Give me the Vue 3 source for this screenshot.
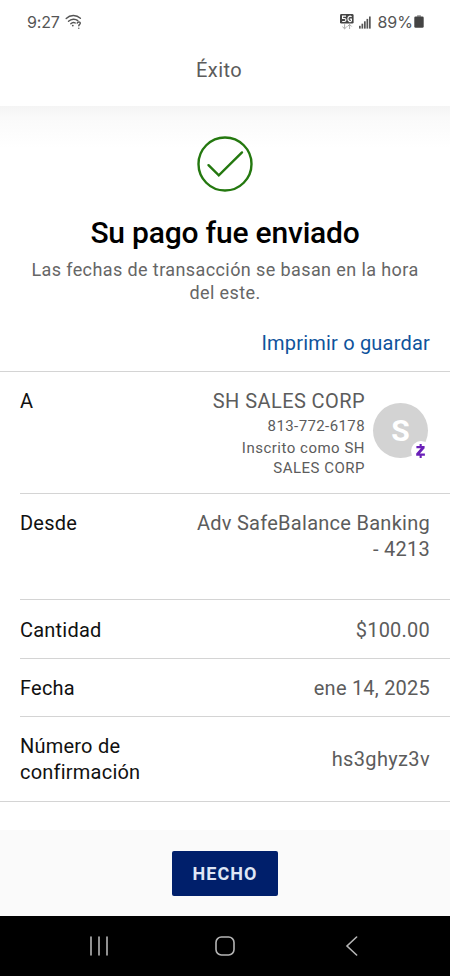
<script setup>
const details = [
  { key: 'from', label: 'Desde', value: 'Adv SafeBalance Banking\n- 4213' },
  { key: 'amount', label: 'Cantidad', value: '$100.00' },
  { key: 'date', label: 'Fecha', value: 'ene 14, 2025' },
  { key: 'confirmation', label: 'Número de\nconfirmación', value: 'hs3ghyz3v' },
]
</script>

<template>
  <div class="screen">
    <header class="top">
      <div class="status">
        <span class="clock">9:27</span>
        <svg class="wifi" width="18" height="16" viewBox="0 0 18 16" fill="none" stroke="#555" stroke-width="1.4" stroke-linecap="round">
          <path d="M1.2 4.6C5.2.6 11.4.6 15.4 4.3" />
          <path d="M3.5 7.3C6.3 4.6 10.4 4.6 12.8 6.6" />
          <path d="M5.8 9.7C7.2 8.3 9 8.2 10.3 9" />
          <circle cx="7.8" cy="11.6" r=".9" fill="#555" stroke="none" />
          <path d="M12.2 9.1c.3-1.6 3.2-1.5 3.1.2 0 1-1.5 1.2-1.5 2.4M13.8 14.2v.1" />
        </svg>
        <span class="spacer"></span>
        <svg class="net" width="14" height="16" viewBox="0 0 14 16">
          <rect x="0" y="0" width="13.6" height="9.6" rx="1.4" fill="#444" />
          <path d="M6 2.2H2.6v2.3h1.8c2 0 2 3-.1 3H2.2M11.5 3C10.6 1.7 7.9 1.9 7.9 4.8S10.6 8 11.4 7V5.2H9.8" fill="none" stroke="#fff" stroke-width="1.2" />
          <path d="M4.6 10.2v4.6M2.4 12.7l2.2 2.1 2.2-2.1M9.6 15v-4.6M7.5 12.5l2.1-2.1 2.1 2.1" fill="none" stroke="#aaa" stroke-width="1" />
        </svg>
        <svg class="signal" width="12" height="13" viewBox="0 0 12 13" fill="#555">
          <rect x="0" y="9.8" width="1.7" height="2.8" />
          <rect x="2.5" y="7.7" width="1.7" height="4.9" />
          <rect x="5" y="5.3" width="1.7" height="7.3" />
          <rect x="7.5" y="2.9" width="1.7" height="9.7" />
          <rect x="10" y="0.5" width="1.7" height="12.1" />
        </svg>
        <span class="percent">89%</span>
        <svg class="battery" width="10" height="13" viewBox="0 0 10 13">
          <rect x="3" y="0" width="4" height="2" rx=".6" fill="#aaa" />
          <rect x="0.3" y="1.4" width="9.4" height="11.4" rx="1.4" fill="#444" />
        </svg>
      </div>
      <h2 class="title">Éxito</h2>
    </header>

    <main class="content">
      <section class="hero">
        <svg class="check" width="56" height="56" viewBox="0 0 56 56" fill="none" stroke="#24780f">
          <circle cx="28" cy="28" r="26.5" stroke-width="2.4" />
          <path d="M11.5 29.2L21.8 39.4L45 16.4" stroke-width="2.4" stroke-linecap="round" />
        </svg>
        <h1 class="headline">Su pago fue enviado</h1>
        <p class="note">Las fechas de transacción se basan en la hora<br />del este.</p>
      </section>
      <a class="print">Imprimir o guardar</a>

      <section class="details">
        <div class="row payee">
          <span class="label">A</span>
          <div class="who">
            <span class="name">SH SALES CORP</span>
            <span class="phone">813-772-6178</span>
            <span class="enrolled">Inscrito como SH</span>
            <span class="enrolled">SALES CORP</span>
          </div>
          <div class="avatar">
            <span>S</span>
            <svg class="badge" width="20" height="20" viewBox="0 0 20 20">
              <circle cx="10" cy="10" r="10" fill="#fff" />
              <path d="M5.4 5h8.2v2.2L9 12.4h4.9v2.3H5.2v-2.2l4.6-5.2H5.4zM8.6 3h2.1v2.4H8.6zM8.6 14.4h2.1v2.6H8.6z" fill="#6a1fb8" />
            </svg>
          </div>
        </div>
        <div v-for="d in details" :key="d.key" class="row" :class="d.key">
          <span class="label">{{ d.label }}</span>
          <span class="value">{{ d.value }}</span>
        </div>
      </section>
    </main>

    <footer class="action">
      <button class="done" type="button">HECHO</button>
    </footer>

    <nav class="system">
      <svg width="20" height="20" viewBox="0 0 20 20" stroke="#b5b5b5" stroke-width="1.6" stroke-linecap="round">
        <path d="M2 1v18M10 1v18M18 1v18" />
      </svg>
      <svg width="20" height="20" viewBox="0 0 20 20" fill="none" stroke="#b5b5b5" stroke-width="1.6">
        <rect x="1" y="1" width="18" height="18" rx="5.4" />
      </svg>
      <svg width="20" height="20" viewBox="0 0 20 20" fill="none" stroke="#b5b5b5" stroke-width="1.6" stroke-linecap="round">
        <path d="M15.6 1L6 10l9.6 9" />
      </svg>
    </nav>
  </div>
</template>

<style>
body {
  background: #fff;
}
</style>

<style scoped>
.screen {
  display: flex;
  flex-direction: column;
  height: 976px;
  overflow: hidden;
  background: #fff;
  color: #5c5c5c;
  font-family: Roboto, sans-serif;
}
.top {
  height: 106px;
  flex: none;
}
.status {
  display: flex;
  align-items: center;
  height: 43px;
  padding: 0 26px 0 27px;
  font-family: Inter, sans-serif;
  font-size: 16px;
  color: #555;
}
.clock {
  letter-spacing: -0.2px;
}
.wifi {
  margin-left: 5px;
}
.spacer {
  flex: 1;
}
.signal {
  margin: 1px 6px 0 5px;
}
.battery {
  margin-left: 1px;
}
.title {
  margin: 14px 12px 0 0;
  text-align: center;
  font-size: 20px;
  line-height: 26px;
  font-weight: 400;
  letter-spacing: 0.4px;
}
.content {
  flex: none;
  height: 724px;
  display: flex;
  flex-direction: column;
  background: linear-gradient(#f4f4f4, #fafafa 12px, #fff 42px);
}
.hero {
  display: flex;
  flex-direction: column;
  align-items: center;
  padding-top: 30px;
}
.headline {
  margin: 22px 0 0;
  font-size: 30px;
  line-height: 38px;
  font-weight: 500;
  letter-spacing: -0.2px;
  color: #000;
}
.note {
  margin: 6px 0 0;
  text-align: center;
  font-size: 18px;
  line-height: 23px;
  letter-spacing: 0.4px;
  color: #666;
}
.print {
  margin: 25px 20px 0 0;
  align-self: flex-end;
  font-size: 20px;
  line-height: 28px;
  letter-spacing: 0.2px;
  color: #0f539c;
}
.details {
  margin-top: 14px;
  border-top: 1px solid #d4d4d4;
  border-bottom: 1px solid #d4d4d4;
}
.row {
  display: flex;
  justify-content: space-between;
  margin-left: 20px;
  padding: 16px 20px 0 0;
  font-size: 20px;
  line-height: 26px;
  letter-spacing: 0.22px;
  white-space: pre;
}
.row + .row {
  border-top: 1px solid #d4d4d4;
}
.label {
  color: #111;
}
.value {
  text-align: right;
}
.from .value {
  letter-spacing: 0.27px;
}
.payee {
  height: 105px;
}
.who {
  display: flex;
  flex-direction: column;
  align-items: flex-end;
  flex: 1;
}
.name {
  letter-spacing: 0.42px;
}
.phone,
.enrolled {
  font-size: 15px;
  line-height: 20px;
  letter-spacing: 0.5px;
}
.phone {
  margin: 2px 0;
  letter-spacing: 0.4px;
}
.avatar {
  position: relative;
  display: flex;
  align-items: center;
  justify-content: center;
  width: 55px;
  height: 55px;
  margin: 15px 2px 0 8px;
  border-radius: 50%;
  background: #d3d3d3;
  color: #fff;
  font: 700 30px Roboto, sans-serif;
}
.badge {
  position: absolute;
  right: -3px;
  bottom: -3px;
}
.from {
  height: 89px;
}
.amount {
  height: 41px;
  padding-top: 17px;
}
.date {
  height: 41px;
}
.confirmation {
  height: 68px;
}
.confirmation .value {
  padding-top: 13px;
  letter-spacing: 0.35px;
}
.action {
  display: flex;
  justify-content: center;
  align-items: flex-start;
  height: 86px;
  flex: none;
  box-sizing: border-box;
  padding-top: 21px;
  background: #fafafa;
}
.done {
  width: 106px;
  height: 45px;
  padding: 0;
  border: 0;
  border-radius: 2px;
  background: #001f6b;
  color: #dfe6f5;
  font: 700 18px Roboto, sans-serif;
  letter-spacing: 1.1px;
}
.system {
  display: flex;
  justify-content: space-between;
  align-items: center;
  flex: 1;
  padding: 4px 89px;
  background: #000;
}
</style>
